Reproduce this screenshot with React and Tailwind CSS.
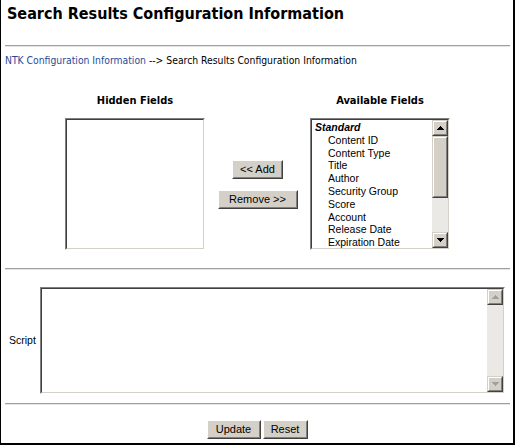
const ui = { fontFamily: '"Liberation Sans", Arial, sans-serif' };
const vd = { fontFamily: '"DejaVu Sans", Tahoma, Verdana, sans-serif' };

const Arrow = ({ up, disabled }) => (
  <svg width="7" height="4" viewBox="0 0 7 4" className="block">
    {up ? (
      <path d="M3 0h1v1h1v1h1v1h1v1H0V3h1V2h1V1h1z" fill={disabled ? "#a0a0a0" : "#000"} />
    ) : (
      <path d="M0 0h7v1H6v1H5v1H4v1H3V3H2V2H1V1H0z" fill={disabled ? "#a0a0a0" : "#000"} />
    )}
  </svg>
);

const ScrollBtn = ({ up, disabled }) => (
  <div className="w-[16px] h-[16px] border border-t-[#d4d0c8] border-l-[#d4d0c8] border-b-[#404040] border-r-[#404040] bg-[#d4d0c8]">
    <div className="w-full h-full border border-t-white border-l-white border-b-[#808080] border-r-[#808080] flex items-center justify-center">
      <Arrow up={up} disabled={disabled} />
    </div>
  </div>
);

const Inset = ({ className, children }) => (
  <div className={"border border-t-[#808080] border-l-[#808080] border-b-white border-r-white " + className}>
    <div className="w-full h-full border border-t-[#404040] border-l-[#404040] border-b-[#d4d0c8] border-r-[#d4d0c8] bg-white flex">
      {children}
    </div>
  </div>
);

const Button = ({ children, className }) => (
  <button
    className={"border border-t-white border-l-white border-b-[#404040] border-r-[#404040] bg-[#d4d0c8] text-[11px] text-black leading-none " + className}
    style={ui}
  >
    <span className="flex items-center justify-center w-full h-full border border-transparent border-b-[#808080] border-r-[#808080]">
      {children}
    </span>
  </button>
);

const Rule = ({ className }) => (
  <div className={"mx-[4px] mr-[3px] h-[2px] border-t border-t-[#a0a0a0] border-b border-b-[#e4e4e4] " + className} />
);

const fields = [
  "Content ID",
  "Content Type",
  "Title",
  "Author",
  "Security Group",
  "Score",
  "Account",
  "Release Date",
  "Expiration Date",
];

export default function App() {
  return (
    <div className="w-[515px] h-[445px] border-l border-r-2 border-b-2 border-black bg-white text-black overflow-hidden">
      <div className="h-[45px] pl-[6px] pt-[4px]">
        <h1 className="text-[16px] font-bold leading-[20px] font-stretch-condensed" style={vd}>
          Search Results Configuration Information
        </h1>
      </div>
      <Rule />

      <div className="pl-[4px] mt-[6px] text-[10.3px] leading-[14px] font-stretch-condensed" style={vd}>
        <a className="text-[#1f4a9c]">NTK Configuration Information</a>
        <span> --&gt; Search Results Configuration Information</span>
      </div>

      <div className="flex pl-[64px] mt-[27px]">
        <div className="w-[140px] flex flex-col">
          <div className="h-[24px] text-center text-[11px] font-bold leading-[14px] font-stretch-condensed" style={vd}>
            Hidden Fields
          </div>
          <Inset className="w-[140px] h-[132px]" />
        </div>

        <div className="w-[105px] flex flex-col items-center justify-center gap-[11px] pt-[24px]">
          <Button className="w-[51px] h-[19px]">&lt;&lt; Add</Button>
          <Button className="w-[80px] h-[19px]">Remove &gt;&gt;</Button>
        </div>

        <div className="w-[140px] flex flex-col">
          <div className="h-[24px] text-center text-[11px] font-bold leading-[14px] font-stretch-condensed" style={vd}>
            Available Fields
          </div>
          <Inset className="w-[140px] h-[132px]">
            <div className="flex-1 overflow-hidden pl-[3px] pt-[1px] text-[10.5px] leading-[12.8px]" style={ui}>
              <div className="font-bold italic">Standard</div>
              {fields.map((f) => (
                <div key={f} className="pl-[13px] whitespace-nowrap">
                  {f}
                </div>
              ))}
            </div>
            <div className="w-[16px] flex flex-col bg-[#ebe9e5]">
              <ScrollBtn up />
              <div className="h-[62px] border border-t-[#d4d0c8] border-l-[#d4d0c8] border-b-[#404040] border-r-[#404040] bg-[#d4d0c8]">
                <div className="h-full border border-t-white border-l-white border-b-[#808080] border-r-[#808080]" />
              </div>
              <div className="flex-1" />
              <ScrollBtn />
            </div>
          </Inset>
        </div>
      </div>

      <Rule className="mt-[18px]" />

      <div className="flex items-center mt-[17px]">
        <div className="w-[39px] pl-[8px] text-[10.5px]" style={ui}>
          Script
        </div>
        <Inset className="w-[465px] h-[107px]">
          <div className="flex-1" />
          <div className="w-[16px] flex flex-col bg-[#ebe9e5]">
            <ScrollBtn up disabled />
            <div className="flex-1" />
            <ScrollBtn disabled />
          </div>
        </Inset>
      </div>

      <Rule className="mt-[9px]" />

      <div className="flex justify-center gap-[2px] mt-[15px]">
        <Button className="w-[54px] h-[19px]">Update</Button>
        <Button className="w-[45px] h-[19px]">Reset</Button>
      </div>
    </div>
  );
}
